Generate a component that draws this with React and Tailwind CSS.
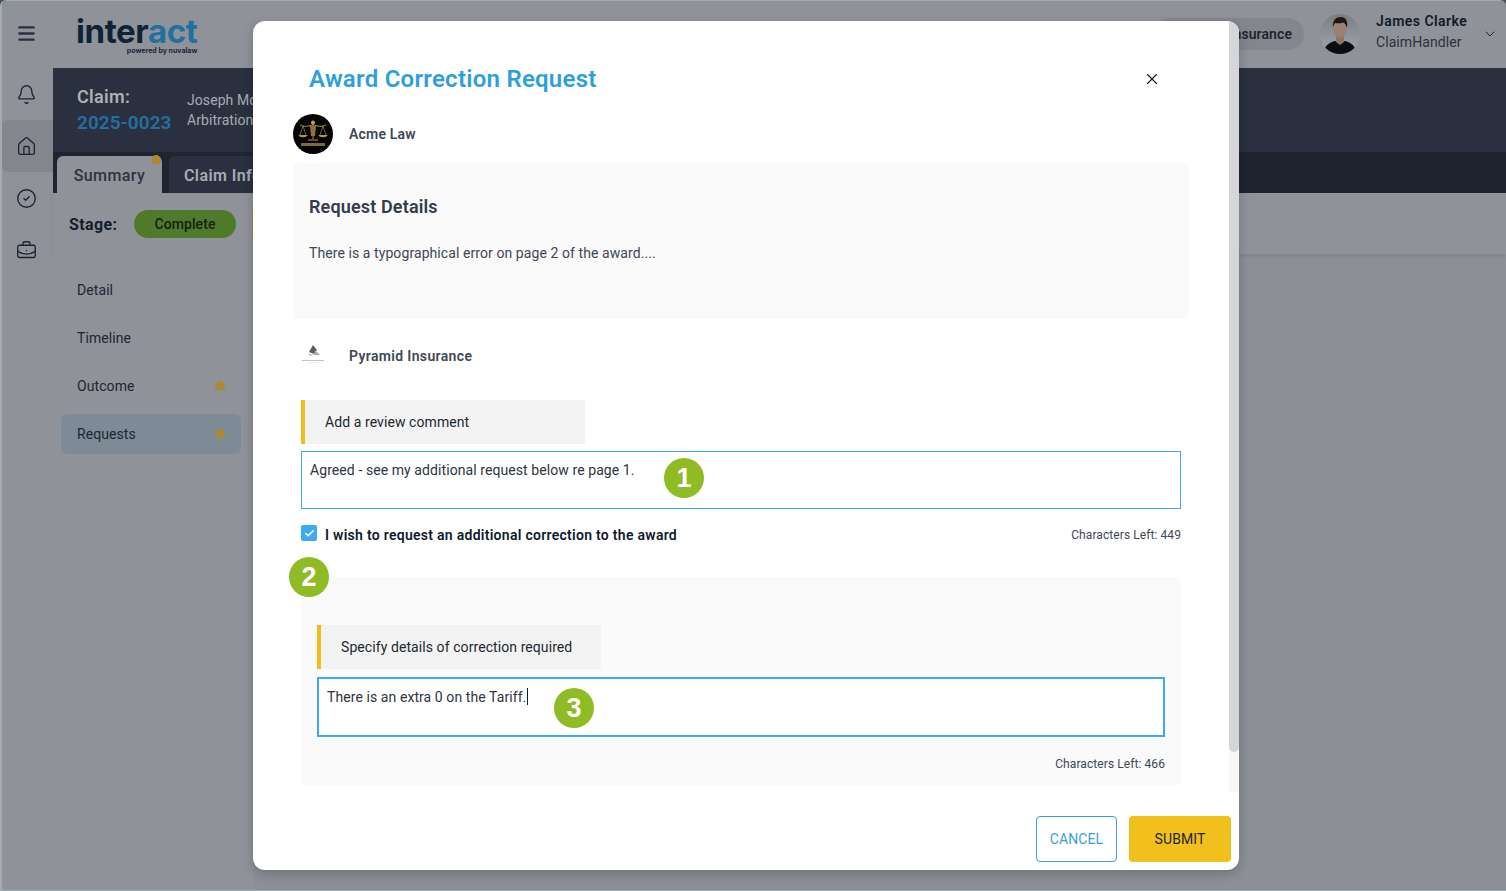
import { Bell, BriefcaseBusiness, Check, ChevronDown, CircleCheck, House, Menu, X } from "lucide-react";

const railIcons = [Bell, House, CircleCheck, BriefcaseBusiness];

const navItems = [
  { label: "Detail" },
  { label: "Timeline" },
  { label: "Outcome", dot: true },
  { label: "Requests", dot: true, active: true },
];

// Numbered green marker laid over the form
const Marker = ({ n, className }) => (
  <div
    className={`absolute flex h-10 w-10 items-center justify-center rounded-full bg-[#8fbc25] font-['Liberation_Sans',sans-serif] text-[27px] font-bold tracking-normal text-white ${className}`}
  >
    {n}
  </div>
);

const AcmeLogo = () => (
  <svg viewBox="0 0 40 40" className="h-10 w-10 shrink-0">
    <circle cx="20" cy="20" r="20" fill="#060505" />
    <g stroke="#b8934a" strokeWidth="1" fill="none">
      <path d="M7 11c4 2 9 1.500 13-.5c4 2 9 2.500 13 .5" />
      <path d="M20 8v17M15 26h10" />
      <path d="M10 12l-3 9M10 12l3 9M30 12l-3 9M30 12l3 9" strokeWidth="0.6" />
    </g>
    <path d="M5.500 21h9c-.5 3-8.500 3-9 0zM25.500 21h9c-.5 3-8.500 3-9 0z" fill="#b8934a" />
    <circle cx="20" cy="8.500" r="2" fill="#c9a24d" />
    <path d="M17 12h6l-1 10h-4z" fill="#8f7336" />
    <rect x="8" y="29" width="24" height="3" fill="#a98a50" opacity="0.75" />
  </svg>
);

const PyramidLogo = () => (
  <svg viewBox="0 0 40 30" className="h-[30px] w-10 shrink-0">
    <path d="M20 4l4 5l-3 4l-5-2z" fill="#5a5d64" />
    <path d="M22 9l5 5h-6z" fill="#a5a7ac" />
    <path d="M15 12l5 2l-3 1z" fill="#bfc0c4" />
    <rect x="9" y="19" width="22" height="1" fill="#c2c3c6" />
    <rect x="14" y="21.500" width="12" height="0.600" fill="#dcdcde" />
  </svg>
);

const UserPhoto = () => (
  <svg viewBox="0 0 40 40" className="h-10 w-10 shrink-0">
    <defs>
      <clipPath id="photo">
        <circle cx="20" cy="20" r="20" />
      </clipPath>
      <linearGradient id="photoBg" x1="0" y1="0" x2="0" y2="1">
        <stop offset="0" stopColor="#7a7d84" />
        <stop offset="1" stopColor="#a4a7ac" />
      </linearGradient>
    </defs>
    <g clipPath="url(#photo)">
      <rect width="40" height="40" fill="url(#photoBg)" />
      <path d="M4 40c0-8 4-11 11-13l5 2l5-2c7 2 11 5 11 13z" fill="#0c0d12" />
      <path d="M16 22h8v6l-4 3l-4-3z" fill="#8c7468" />
      <ellipse cx="20" cy="15" rx="6.500" ry="9" fill="#9b8175" />
      <path d="M13 14c-1-8 3-11 8-11c5 0 7 4 6 11c-1-3-2-5-4-5.500c-3 1-6 1-8 .5c-1 1-2 3-2 5z" fill="#201712" />
    </g>
  </svg>
);

const FieldLabel = ({ children }) => (
  <div className="flex h-11 w-[284px] items-center border-l-4 border-[#f2bc1b] bg-[#f3f3f3] pl-5 text-sm text-[#22272f]">
    {children}
  </div>
);

function Page() {
  return (
    <div className="flex h-full flex-col bg-[#8f9299]">
      {/* Top bar */}
      <header className="flex h-[67px] shrink-0 items-center pb-[2px]">
        <div className="flex w-[49px] justify-center">
          <Menu size={21} strokeWidth={2.75} className="text-[#2a3040]" />
        </div>
        <div className="mt-[3px] ml-[25px] flex flex-col items-end font-['Inter',sans-serif] leading-none">
          <div className="text-[33px] leading-[30px] font-bold tracking-[-0.4px] text-[#0f2337]">
            inter<span className="text-[#23709f]">act</span>
          </div>
          <div className="text-[7px] leading-[9px] font-bold tracking-normal text-[#1c2636]">powered by nuvalaw</div>
        </div>
        <div className="ml-auto flex items-center">
          <div className="flex h-8 w-[150px] items-center justify-end rounded-full bg-[#84868d] pr-3 text-sm font-semibold whitespace-nowrap text-[#20242e]">
            Pyramid Insurance
          </div>
          <div className="ml-4">
            <UserPhoto />
          </div>
          <div className="-mt-[3px] ml-4 w-[99px] text-sm leading-[21px]">
            <div className="font-semibold tracking-[0.45px] text-[#101a2c]">James Clarke</div>
            <div className="text-[#2b303c]">ClaimHandler</div>
          </div>
          <ChevronDown size={16} strokeWidth={1.5} className="mr-2 ml-[7px] text-[#1d2430]" />
        </div>
      </header>

      <div className="flex min-h-0 flex-1">
        {/* Icon rail */}
        <aside className="w-[51px] shrink-0">
          {railIcons.map((Icon, i) => (
            <div
              key={i}
              className={`flex h-[52px] items-center justify-center rounded-l-md pr-[2px] ${i === 1 ? "bg-[#84868d]" : ""}`}
            >
              <Icon size={21} strokeWidth={1.5} className="text-[#1b2230]" />
            </div>
          ))}
        </aside>

        <main className="flex min-w-0 flex-1 flex-col bg-[#8c8f96]">
          {/* Claim band */}
          <section className="flex h-[84px] items-start bg-[#2a3040] pt-4 pl-6">
            <div className="w-[110px]">
              <div className="text-lg leading-[26px] font-semibold tracking-[0.3px] text-[#aeb1b6]">Claim:</div>
              <div className="text-[19px] leading-[26px] font-semibold text-[#23709f]">2025-0023</div>
            </div>
            <div className="pt-1.5 text-sm leading-[20px] text-[#a8abb2]">
              <div>Joseph Mo</div>
              <div>Arbitration</div>
            </div>
          </section>

          {/* Tabs */}
          <div className="flex h-[41px] items-end gap-[7px] bg-[#1f2430] pl-1">
            <div className="relative flex h-[37px] w-[105px] items-center justify-center rounded-t-md bg-[#8f9299] pt-[3px] text-base font-medium tracking-[0.4px] text-[#2f333f]">
              Summary
              <span className="absolute -top-px right-[1px] h-[10px] w-[10px] rounded-full bg-[#a88b33]" />
            </div>
            <div className="flex h-[37px] w-[160px] items-center rounded-t-md bg-[#2a3040] pt-[3px] pl-[15px] text-base font-semibold tracking-[0.4px] text-[#a9acb3]">
              Claim Info
            </div>
          </div>

          {/* Stage row */}
          <div className="flex h-[61px] items-center bg-[#8f9299] pl-4 shadow-[0_2px_4px_rgba(0,0,0,0.08)]">
            <span className="w-[65px] pt-[2px] text-base font-bold tracking-[0.4px] text-[#141c2c]">Stage:</span>
            <span className="flex h-7 w-[102px] items-center justify-center rounded-full bg-[#4f7a2c] text-sm font-medium text-[#16210f]">
              Complete
            </span>
            <span className="ml-4 h-8 w-[60px] rounded bg-[#a88b33]" />
          </div>

          {/* Side nav */}
          <nav className="w-[200px] flex-1 bg-[#8f9299] px-2 pt-4">
            <div className="flex flex-col gap-2">
              {navItems.map((item) => (
                <div
                  key={item.label}
                  className={`flex h-10 w-[180px] items-center justify-between rounded-md pr-4 pl-4 text-sm text-[#1f2533] ${item.active ? "bg-[#7e8a96]" : ""}`}
                >
                  {item.label}
                  {item.dot && <span className="h-[10px] w-[10px] rounded-full bg-[#a88b33]" />}
                </div>
              ))}
            </div>
          </nav>
        </main>
      </div>
    </div>
  );
}

function CorrectionModal() {
  return (
    <div className="absolute top-[20px] left-[251px] flex h-[849px] w-[986px] flex-col overflow-hidden rounded-xl bg-white shadow-[0_4px_12px_rgba(0,0,0,0.2)]">
      <div className="flex h-[771px] shrink-0">
        <div className="relative min-w-0 flex-1 px-10 pt-10">
          <div className="flex h-[36px] items-center justify-between pr-[28px] pl-4">
            <h2 className="text-2xl font-semibold tracking-[0.25px] text-[#2f9fdc]">Award Correction Request</h2>
            <X size={18} strokeWidth={1.5} className="text-[#15181d]" />
          </div>

          <div className="mt-[17px] flex h-10 items-center gap-4">
            <AcmeLogo />
            <span className="text-sm font-semibold tracking-[0.2px] text-[#3f4757]">Acme Law</span>
          </div>

          <section className="mt-[9px] h-[156px] w-[896px] rounded bg-[#fafafa] px-4 pt-[31px]">
            <h3 className="text-lg leading-[26px] font-semibold tracking-[0.15px] text-[#343b49]">Request Details</h3>
            <p className="mt-[23px] text-sm leading-5 text-[#3f4757]">
              There is a typographical error on page 2 of the award....
            </p>
          </section>

          <div className="mt-[17px] flex h-10 items-center gap-4">
            <PyramidLogo />
            <span className="text-sm font-semibold tracking-[0.35px] text-[#3f4757]">Pyramid Insurance</span>
          </div>

          <div className="relative mt-[24px] ml-2 w-[880px]">
            <FieldLabel>Add a review comment</FieldLabel>

            <div className="mt-[7px] h-[58px] border border-[#3fa9f5] px-2 pt-[8px] text-sm leading-5 text-[#2e3441]">
              Agreed - see my additional request below re page 1.
            </div>
            <Marker n="1" className="top-[58px] left-[363px]" />

            <div className="mt-4 flex h-4 items-center">
              <span className="flex h-4 w-4 items-center justify-center rounded-[2px] bg-[#3fa9f5]">
                <Check size={11} strokeWidth={3.5} className="text-white" />
              </span>
              <span className="mt-1 ml-2 text-sm font-semibold tracking-[0.28px] text-[#101a2c]">
                I wish to request an additional correction to the award
              </span>
              <span className="mt-1 ml-auto text-xs text-[#3f4757]">Characters Left: 449</span>
            </div>

            <Marker n="2" className="top-[157px] -left-3" />

            <section className="mt-9 h-[208px] rounded bg-[#fafafa] px-4 pt-[48px]">
              <FieldLabel>Specify details of correction required</FieldLabel>
              <div className="relative mt-2 h-[60px] border-2 border-[#3fa9f5] bg-white px-2 pt-2 text-sm leading-5 text-[#2e3441]">
                There is an extra 0 on the Tariff.
                <span className="ml-px inline-block h-[17px] w-px bg-[#15181d] align-[-3px]" />
                <Marker n="3" className="top-[9px] left-[235px]" />
              </div>
              <div className="mt-[19px] text-right text-xs text-[#3f4757]">Characters Left: 466</div>
            </section>
          </div>
        </div>

        {/* Scrollbar */}
        <div className="w-[10px] shrink-0 bg-[#f6f6f7]">
          <div className="h-[731px] rounded-b-md bg-[#d5d6da]" />
        </div>
      </div>

      <div className="flex flex-1 items-start justify-end gap-3 pt-6 pr-2">
        <button className="h-[46px] w-[81px] rounded border border-[#3aa0dc] text-sm text-[#3aa0dc]">
          CANCEL
        </button>
        <button className="h-[46px] w-[102px] rounded bg-[#f2c01c] text-sm text-[#22262c]">
          SUBMIT
        </button>
      </div>
    </div>
  );
}

export default function App() {
  return (
    <div className="h-[891px] w-[1506px] overflow-hidden bg-[#4b4e55] font-['Roboto',sans-serif] tracking-[0.08px]">
      <div className="relative h-full w-full overflow-hidden rounded-t-md border-t border-b border-l-2 border-[#a0abb3]">
        <Page />
        <CorrectionModal />
      </div>
    </div>
  );
}
